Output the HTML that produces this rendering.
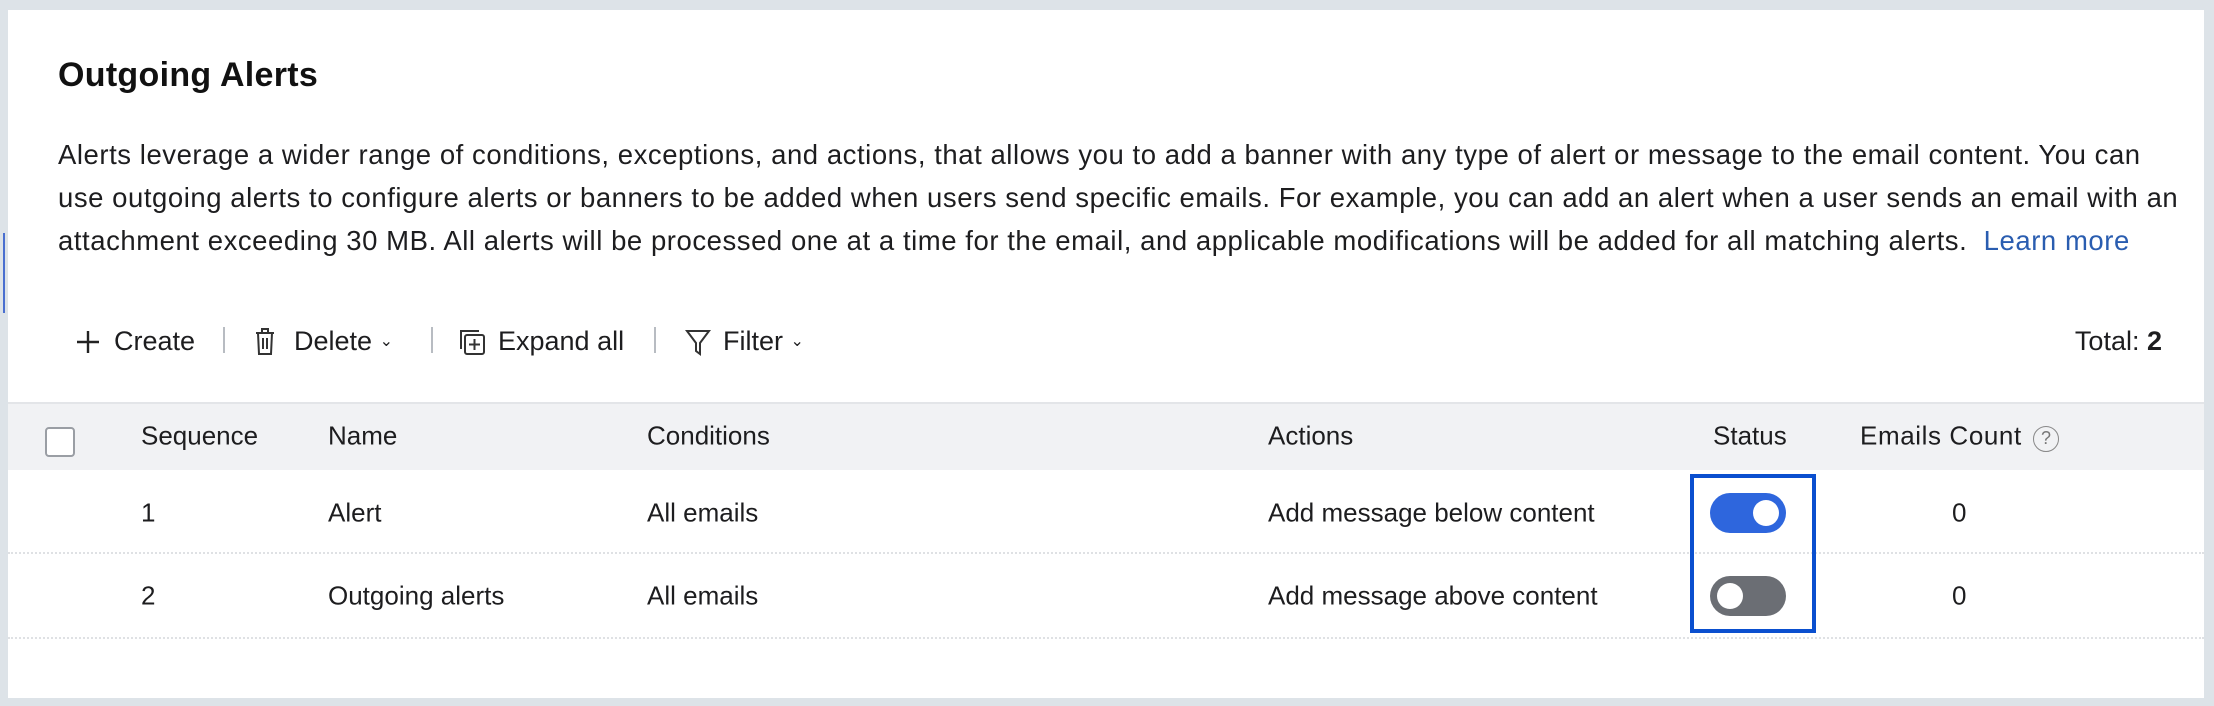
<!DOCTYPE html>
<html><head><meta charset="utf-8"><style>
*{margin:0;padding:0;box-sizing:border-box}
body{width:2214px;height:706px;background:#dde3e8;font-family:"Liberation Sans",sans-serif;color:#1d1d1f;position:relative;overflow:hidden}
.card{position:absolute;left:8px;top:10px;width:2196px;height:688px;background:#fff}
.abs{position:absolute;white-space:nowrap}
h1{position:absolute;left:50px;top:46px;font-size:34px;font-weight:bold;color:#111;letter-spacing:0.3px}
.p{position:absolute;left:50px;top:123px;font-size:27.5px;line-height:43px;color:#1d1d1f;white-space:nowrap;letter-spacing:0.55px}
.p a{color:#2a5db0;text-decoration:none}
.tb{font-size:27px;top:316px}
.sep{position:absolute;top:317px;width:2px;height:26px;background:#b8bcc2}
.head{position:absolute;left:0;top:392px;width:2196px;height:68px;background:#f1f2f4;border-top:2px solid #e3e5e8}
.cell{position:absolute;font-size:26px;white-space:nowrap;transform:translateY(-50%)}
.div{position:absolute;left:0;width:2196px;border-top:2px dotted #dfe1e4}
.tog{position:absolute;width:76px;height:40px;border-radius:20px}
.knob{position:absolute;top:7px;width:26px;height:26px;border-radius:50%;background:#fff}
</style></head><body>
<div style="position:absolute;left:3px;top:233px;width:2px;height:80px;background:#4a6fd0"></div>
<div class="card">
<h1>Outgoing Alerts</h1>
<div class="p">Alerts leverage a wider range of conditions, exceptions, and actions, that allows you to add a banner with any type of alert or message to the email content. You can<br>use outgoing alerts to configure alerts or banners to be added when users send specific emails. For example, you can add an alert when a user sends an email with an<br>attachment exceeding 30 MB. All alerts will be processed one at a time for the email, and applicable modifications will be added for all matching alerts. &nbsp;<a>Learn more</a></div>

<svg class="abs" style="left:68px;top:320px" width="24" height="24" viewBox="0 0 24 24" fill="none" stroke="#222" stroke-width="2.4"><path d="M12 1v22M1 12h22"/></svg>
<div class="abs tb" style="left:106px">Create</div>
<div class="sep" style="left:215px"></div>
<svg class="abs" style="left:246px;top:317px" width="22" height="30" viewBox="0 0 22 30" fill="none" stroke="#333" stroke-width="2"><path d="M2 6h18M8 6V2h6v4M4 6l1 21h12l1-21M9 11v11M13 11v11"/></svg>
<div class="abs tb" style="left:286px">Delete <span style="font-size:16px;position:relative;top:-4px">&#8964;</span></div>
<div class="sep" style="left:423px"></div>
<svg class="abs" style="left:451px;top:319px" width="28" height="28" viewBox="0 0 28 28" fill="none" stroke="#333" stroke-width="2"><path d="M2 20V2h18"/><rect x="6" y="6" width="19" height="19" rx="2"/><path d="M15.5 10v11M10 15.5h11"/></svg>
<div class="abs tb" style="left:490px">Expand all</div>
<div class="sep" style="left:646px"></div>
<svg class="abs" style="left:677px;top:318px" width="26" height="30" viewBox="0 0 26 30" fill="none" stroke="#333" stroke-width="2"><path d="M2 3h22L15 15v11l-4-3v-8z"/></svg>
<div class="abs tb" style="left:715px">Filter <span style="font-size:16px;position:relative;top:-4px">&#8964;</span></div>
<div class="abs tb" style="right:42px">Total: <b>2</b></div>

<div class="head"></div>
<div style="position:absolute;left:37px;top:417px;width:30px;height:30px;border:2px solid #9a9ea4;border-radius:4px;background:#fff"></div>
<div class="cell" style="left:133px;top:426px">Sequence</div>
<div class="cell" style="left:320px;top:426px">Name</div>
<div class="cell" style="left:639px;top:426px">Conditions</div>
<div class="cell" style="left:1260px;top:426px">Actions</div>
<div class="cell" style="left:1705px;top:426px">Status</div>
<div class="cell" style="left:1852px;top:426px;letter-spacing:0.6px">Emails Count</div>
<div style="position:absolute;left:2025px;top:416px;width:26px;height:26px;border:1.5px solid #888;border-radius:50%;font-size:18px;color:#777;text-align:center;line-height:23px">?</div>

<div class="cell" style="left:133px;top:503px">1</div>
<div class="cell" style="left:320px;top:503px">Alert</div>
<div class="cell" style="left:639px;top:503px">All emails</div>
<div class="cell" style="left:1260px;top:503px">Add message below content</div>
<div class="cell" style="left:1944px;top:503px">0</div>
<div class="div" style="top:542px"></div>
<div class="cell" style="left:133px;top:586px">2</div>
<div class="cell" style="left:320px;top:586px">Outgoing alerts</div>
<div class="cell" style="left:639px;top:586px">All emails</div>
<div class="cell" style="left:1260px;top:586px">Add message above content</div>
<div class="cell" style="left:1944px;top:586px">0</div>
<div class="div" style="top:627px"></div>

<div class="tog" style="left:1702px;top:483px;background:#2e66dd"><div class="knob" style="left:43px"></div></div>
<div class="tog" style="left:1702px;top:566px;background:#6b6e74"><div class="knob" style="left:7px"></div></div>
<div style="position:absolute;left:1682px;top:464px;width:126px;height:159px;border:4px solid #0a4fcf"></div>
</div>
</body></html>
